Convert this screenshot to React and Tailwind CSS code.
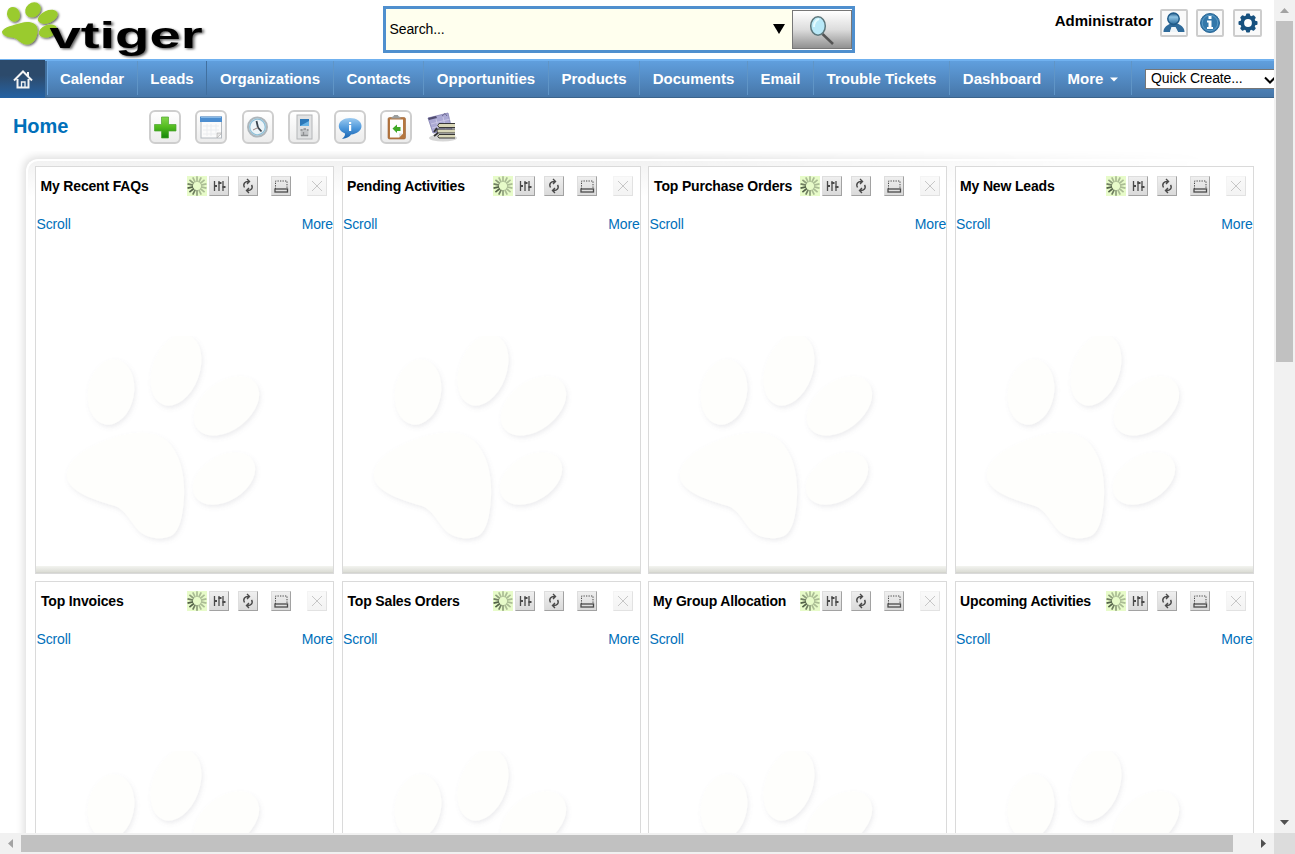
import React from "react";

const TABS = [
  ["Calendar", "w-[91px]"],
  ["Leads", "w-[69px]"],
  ["Organizations", "w-[127px]"],
  ["Contacts", "w-[90px]"],
  ["Opportunities", "w-[125px]"],
  ["Products", "w-[91px]"],
  ["Documents", "w-[108px]"],
  ["Email", "w-[66px]"],
  ["Trouble Tickets", "w-[136px]"],
  ["Dashboard", "w-[105px]"],
  ["More", "w-[77px]"],
];

const WIDGETS = [
  { title: "My Recent FAQs", more: true, pad: "pl-[4.500px]" },
  { title: "Pending Activities", more: true, pad: "pl-[4.500px]" },
  { title: "Top Purchase Orders", more: true, pad: "pl-[5px]" },
  { title: "My New Leads", more: true, pad: "pl-[4.500px]" },
  { title: "Top Invoices", more: true, pad: "pl-[5px]" },
  { title: "Top Sales Orders", more: true, pad: "pl-[5px]" },
  { title: "My Group Allocation", more: false, pad: "pl-[4px]" },
  { title: "Upcoming Activities", more: true, pad: "pl-[4.500px]" },
];

function Logo() {
  return (
    <svg width="210" height="59" viewBox="0 0 210 59" className="shrink-0">
      <defs>
        <filter id="logoShadow" x="-10%" y="-10%" width="120%" height="130%">
          <feDropShadow dx="1.2" dy="1.2" stdDeviation="0.9" floodColor="#000" floodOpacity="0.65" />
        </filter>
      </defs>
      <g fill="#9acb2d" filter="url(#logoShadow)">
        <ellipse cx="13.5" cy="14.300" rx="6.3" ry="7.500" transform="rotate(-20 13.5 14.3)" />
        <ellipse cx="33" cy="9.8" rx="8.300" ry="7" transform="rotate(-40 33 9.800)" />
        <ellipse cx="47.800" cy="16.800" rx="10.500" ry="6.200" transform="rotate(-24 47.8 16.8)" />
        <ellipse cx="48" cy="31" rx="9.500" ry="6" transform="rotate(-20 48 31)" />
        <path d="M2 31.500C4 27 14 25 21 23C29 20.500 37 23 37.500 29C38 38 33 44.500 27 44.500C20 44.500 19 38.500 12 37.500C7 37 2 35.500 2 31.500Z" />
      </g>
      <text
        transform="translate(49.500 48) scale(1.52 1)"
        fontFamily="Liberation Sans, sans-serif"
        fontWeight="700"
        fontSize="37"
        fill="#000"
        filter="url(#logoShadow)"
      >
        vtiger
      </text>
    </svg>
  );
}

function SearchBox() {
  return (
    <div className="flex h-[47px] w-[472px] shrink-0 border-[3px] border-[#4f8fce] bg-white">
      <div className="flex flex-1 items-center justify-between bg-[#ffffee] pl-[3.500px] pr-[7px] text-[14px] tracking-[-.1px]">
        <span>Search...</span>
        <svg width="12" height="11" viewBox="0 0 12 11">
          <path d="M0 0H12L6 10Z" fill="#000" />
        </svg>
      </div>
      <div className="mt-px flex h-[39px] w-[60px] items-center justify-center border border-[#777] bg-linear-to-b from-white via-[#ddd] to-[#919191]">
        <svg width="28" height="32" viewBox="0 0 28 32">
          <path d="M14.500 20L25 30" stroke="#555" strokeWidth="2.500" />
          <ellipse cx="10" cy="12" rx="7.300" ry="9.300" fill="#b9e9f8" stroke="#5d777c" strokeWidth="1.500" />
          <path d="M6 13C6 8 8 6 11 5" stroke="#e4fbff" strokeWidth="2" fill="none" />
        </svg>
      </div>
    </div>
  );
}

function UserIcon() {
  return (
    <svg width="24" height="24" viewBox="0 0 24 24">
      <defs>
        <linearGradient id="head" x1="0" y1="0" x2="0" y2="1">
          <stop offset="0" stopColor="#1d5583" />
          <stop offset=".35" stopColor="#8fc4e4" />
          <stop offset="1" stopColor="#2b6b9c" />
        </linearGradient>
      </defs>
      <path d="M1.500 21C1.500 17 4 15 7.500 13L12 12L16.500 13C20 15 22.500 17 22.500 21H16L13.500 16.500H9.500L8 21Z" fill="#2f6b9b" />
      <path d="M9.500 16H13.500L16 21H8Z" fill="#eef4f8" />
      <circle cx="11.500" cy="7.700" r="5.700" fill="url(#head)" stroke="#1f5a88" strokeWidth="1.500" />
    </svg>
  );
}

function InfoIcon() {
  return (
    <svg width="22" height="22" viewBox="0 0 22 22">
      <circle cx="11" cy="11" r="9.500" fill="#3378aa" stroke="#2a6796" />
      <circle cx="11" cy="11" r="7.800" fill="none" stroke="#5b9bc7" strokeWidth="1" />
      <path d="M9.500 4h3v3h-3zM8 8.500h4.500V15H14v2H8v-2h1.500v-4.500H8z" fill="#fff" />
    </svg>
  );
}

function GearIcon() {
  return (
    <svg width="22" height="22" viewBox="0 0 22 22">
      <g fill="#17517f">
        <circle cx="11" cy="11" r="7.700" />
        {[0, 45, 90, 135].map((a) => (
          <rect key={a} x="9" y="1.500" width="4" height="19" rx="1" transform={`rotate(${a} 11 11)`} />
        ))}
      </g>
      <circle cx="11" cy="11" r="3.900" fill="#fff" />
    </svg>
  );
}

function HeaderButton({ children, width }) {
  return (
    <div className={`flex h-[28px] items-center justify-center rounded-[2px] border-2 border-[#cdcdcd] bg-[#fafafa] ${width}`}>
      {children}
    </div>
  );
}

function ToolButton({ children }) {
  return (
    <div className="flex h-[34px] w-[32px] items-center justify-center rounded-[6px] border-2 border-[#cecece] bg-linear-to-b from-white to-[#ececec]">
      {children}
    </div>
  );
}

function Toolbar() {
  return (
    <div className="flex gap-[14.300px]">
      <ToolButton>
        <svg width="24" height="26" viewBox="0 0 24 26">
          <defs>
            <linearGradient id="plus" x1="0" y1="0" x2="0" y2="1">
              <stop offset="0" stopColor="#83d64c" />
              <stop offset=".45" stopColor="#55bd20" />
              <stop offset="1" stopColor="#14860a" />
            </linearGradient>
          </defs>
          <path d="M8.500 3h7v7.500H23v6.500h-7.500V24h-7v-7H1.500v-6.500h7z" fill="url(#plus)" stroke="#4ba52e" strokeWidth=".7" />
        </svg>
      </ToolButton>
      <ToolButton>
        <svg width="26" height="26" viewBox="0 0 26 26">
          <rect x="3" y="3" width="20.500" height="21" fill="#fbfbfb" stroke="#b4bac0" />
          <rect x="2" y="2.500" width="22" height="5.500" fill="#4d8ed0" />
          <path d="M3 3.500h20" stroke="#86b9e8" />
          <path d="M5 12h16M5 16h16M5 20h13M9 10v12M13 10v12M18 10v9" stroke="#e9ebed" strokeWidth=".8" />
          <path d="M24 19h-5v5z" fill="#e5e5e5" stroke="#aaa" strokeWidth=".6" />
        </svg>
      </ToolButton>
      <ToolButton>
        <svg width="26" height="26" viewBox="0 0 26 26">
          <circle cx="12.500" cy="13" r="9.500" fill="#ecf4f8" stroke="#aeb6bb" strokeWidth="2" />
          <circle cx="12.500" cy="13" r="7.800" fill="none" stroke="#8fc0d8" strokeWidth="1.300" />
          <path d="M11.500 7L13 13.500L16.500 17.500" stroke="#3b4650" strokeWidth="1.800" fill="none" />
          <path d="M13 13.500L8 16" stroke="#9a8580" />
        </svg>
      </ToolButton>
      <ToolButton>
        <svg width="24" height="28" viewBox="0 0 24 28">
          <rect x="5" y="2" width="15" height="24" fill="#e1e2e3" stroke="#b4b6b8" />
          <rect x="8" y="6" width="9" height="7" fill="#2b78b9" />
          <path d="M8 13L17 8v5z" fill="#68b4e6" />
          <rect x="8.500" y="16" width="8" height="7" fill="#c3c5c7" />
          <path d="M8.500 17h2M11.500 16h2.500M15 17h1.500M11.500 19v3M9 22.500h7" stroke="#8d8f91" strokeWidth="1.300" />
        </svg>
      </ToolButton>
      <ToolButton>
        <svg width="26" height="26" viewBox="0 0 26 26">
          <defs>
            <linearGradient id="bubble" x1="0" y1="0" x2="0" y2="1">
              <stop offset="0" stopColor="#9bcaf0" />
              <stop offset=".5" stopColor="#4b96da" />
              <stop offset="1" stopColor="#1761ae" />
            </linearGradient>
          </defs>
          <path d="M13 4C19.500 4 24.500 7.500 24.500 12S20 20 14 20.500C13 22.500 10 24.500 5 25C8 22.500 8 21 8 19.500C4 18 1.800 15 1.800 12C1.800 7 7 4 13 4Z" fill="url(#bubble)" />
          <path d="M12 8h2.200v2H12zM12 11h2.200v6H12z" fill="#fff" />
        </svg>
      </ToolButton>
      <ToolButton>
        <svg width="26" height="28" viewBox="0 0 26 28">
          <rect x="5" y="4.500" width="17.500" height="21.500" rx="1.500" fill="#b4763f" stroke="#9c6335" strokeWidth=".6" />
          <path d="M7 6.500h13v14l-4 4H7z" fill="#fdfdfd" />
          <path d="M20 20.500h-4v4z" fill="#ddd" />
          <path d="M8 5.500C9 3 11 4 11 2h4c0 2 2 1 3 3.500z" fill="#9b9e9e" />
          <path d="M9.500 15.500l4.500-4v2.500h3.500v4H14V20z" fill="#3da824" />
        </svg>
      </ToolButton>
      <div className="flex h-[34px] w-[32px] items-center justify-center">
        <svg width="32" height="34" viewBox="0 0 32 34">
          <ellipse cx="16" cy="28" rx="14" ry="3.500" fill="#bbb" opacity=".6" />
          <path d="M1 8L21 3L25 20L6 23Z" fill="#aba9d4" stroke="#8482b3" strokeWidth=".8" />
          <path d="M1 8L9 6L10 8L2 10Z" fill="#514c70" />
          <path d="M15 6l3-2.500L20 6" stroke="#6a6690" fill="none" />
          <path d="M4 14l19-5M5 18l19-5M9 9l3 13M16 7l3 13" stroke="#cfcde8" strokeWidth=".8" />
          <path d="M11 14h17v3.500H11zM10 19.500h18V23H10zM11 25h17v3H11z" fill="#d9d7b8" />
          <path d="M28 13.500H12q-2.500 2 0 4h16M28 19H11q-2.500 2 0 4h17M28 24.500H12q-2.500 2 0 3.500h16" stroke="#383838" strokeWidth="1" fill="none" />
          <path d="M7 26l4-3M7 22l3-4" stroke="#333" strokeWidth="2" />
        </svg>
      </div>
    </div>
  );
}

function Loader() {
  return (
    <svg width="20" height="20" viewBox="0 0 20 20" className="bg-[#e7fbc9]">
      {Array.from({ length: 14 }, (_, i) => (
        <path
          key={i}
          d="M10 .3V6"
          stroke="#3c4a34"
          strokeWidth="1.700"
          opacity={0.35 + 0.6 * Math.max(0, 1 - Math.abs(i - 9.5) / 3.5)}
          transform={`rotate(${i * (360 / 14)} 10 10)`}
        />
      ))}
    </svg>
  );
}

function SmallButton({ children, className = "" }) {
  return (
    <div className={`flex h-[20px] w-[20px] items-center justify-center border border-t-[#dedede] border-l-[#dedede] border-r-[#a2a2a2] border-b-[#a2a2a2] bg-linear-to-b from-[#efefef] to-[#dadada] ${className}`}>
      <svg width="18" height="18" viewBox="0 0 18 18" fill="none" stroke="#4a4a4a">
        {children}
      </svg>
    </div>
  );
}

function Paw() {
  return (
    <svg width="210" height="230" viewBox="60 335 210 230" className="ml-[24px] mt-[101px] shrink-0">
      <defs>
        <filter id="pawShadow" x="-10%" y="-10%" width="120%" height="125%">
          <feDropShadow dx="1.500" dy="2.500" stdDeviation="2" floodColor="#777788" floodOpacity="0.130" />
        </filter>
      </defs>
      <g fill="#fefefc" filter="url(#pawShadow)">
        <ellipse cx="111" cy="391" rx="23" ry="33" transform="rotate(10 111 391)" />
        <ellipse cx="176" cy="369" rx="23.500" ry="37" transform="rotate(20 176 369)" />
        <ellipse cx="226.500" cy="405" rx="37" ry="24" transform="rotate(-38 226.500 405)" />
        <ellipse cx="224" cy="477.500" rx="34" ry="22.500" transform="rotate(-32 224 477.500)" />
        <path d="M67 475C67 456 92 444 113 437C127 432 152 427 167 440C181 453 185 476 184 496C183 514 180 530 171 535C161 539 148 538 139 530C131 522 126 509 115 505C98 500 67 491 67 475Z" />
      </g>
    </svg>
  );
}

function Widget({ title, more, pad }) {
  return (
    <section className="flex h-[408px] w-[299px] flex-col overflow-hidden border border-[#dadada] bg-white">
      <div className="mt-px flex h-[38px] items-center pr-[6.400px]">
        <h2 className={`flex-1 whitespace-nowrap text-[14px] font-bold tracking-[-.17px] ${pad}`}>{title}</h2>
        <Loader />
        <SmallButton className="ml-[2px]">
          <path d="M4.500 4v10M9 4v10M13 4v10" strokeWidth="1.300" />
          <path d="M4.500 9h2.500M8.500 6h3M12.500 10h3" strokeWidth="2" />
        </SmallButton>
        <SmallButton className="ml-[9px]">
          <path d="M10 16L7.500 13.500L10 11M8 13.500C12 14 14.500 11 12.500 8M8 2L10.500 4.500L8 7M10 4.500C6 4 3.500 7 5.500 10.500" strokeWidth="1.400" />
        </SmallButton>
        <SmallButton className="ml-[13px]">
          <path d="M3.500 12V4H15V12" strokeDasharray="1.300 1.200" />
          <rect x="3" y="12" width="12.500" height="3" strokeWidth="1.300" />
        </SmallButton>
        <SmallButton className="ml-[16px] opacity-30">
          <path d="M4 4l10 10M14 4L4 14" />
        </SmallButton>
      </div>
      <div className="mt-[9px] flex h-[22px] items-center justify-between pl-[.5px] text-[14px] tracking-[-.15px] text-[#0070ba]">
        <span>Scroll</span>
        {more && <span>More</span>}
      </div>
      <Paw />
      <div className="mt-auto h-[7px] shrink-0 border-b border-[#d4d5cf] bg-linear-to-b from-[#f3f4f0] to-[#dcddd6]" />
    </section>
  );
}

function Arrow({ d, fill }) {
  return (
    <svg width="9" height="9" viewBox="0 0 9 9">
      <path d={d} fill={fill} />
    </svg>
  );
}

export default function App() {
  return (
    <div className="grid h-[854px] w-[1295px] grid-cols-[1274px_21px] grid-rows-[833px_21px] overflow-hidden bg-white font-['Liberation_Sans',Arial,sans-serif] text-black">
      <main className="flex min-w-0 flex-col overflow-hidden">
        <header className="flex h-[59px] shrink-0 items-start">
          <Logo />
          <div className="ml-[173px] mt-[6px]">
            <SearchBox />
          </div>
          <div className="ml-auto mr-[12px] mt-[9px] flex">
            <span className="mr-[7px] mt-px text-[15px] font-bold leading-[22px]">Administrator</span>
            <HeaderButton width="w-[28px]"><UserIcon /></HeaderButton>
            <div className="w-[8px]" />
            <HeaderButton width="w-[28px]"><InfoIcon /></HeaderButton>
            <div className="w-[9px]" />
            <HeaderButton width="w-[29px]"><GearIcon /></HeaderButton>
          </div>
        </header>

        <nav className="flex h-[39px] w-[1300px] shrink-0 border-b border-t-2 border-b-[#3b648c] border-t-[#70b1ef] bg-linear-to-b from-[#609fde] to-[#4676a8]">
          <div className="-mt-px flex h-[38px] w-[45px] shrink-0 items-center justify-center bg-linear-to-b from-[#2c4a6b] from-40% to-[#2462a3]">
            <svg width="20" height="20" viewBox="0 0 20 20" fill="none" stroke="#f4f4f4" strokeWidth="2">
              <path d="M1 11.500L10 2.500L19 11.500M4.500 10V18.500H15.500V10M15 3v4" />
              <path d="M8.500 18v-5h3.500v5" strokeWidth="1.300" />
            </svg>
          </div>
          <div className="w-[2px] shrink-0 bg-[#41709f]" />
          {TABS.map(([name, width], i) => (
            <div
              key={name}
              className={`mb-[2px] flex shrink-0 items-center justify-center border-r pt-[2px] text-[15px] font-bold text-white ${name === "Leads" ? "border-r-[#41709f]" : "border-r-[#6095c6]"} ${i === 0 ? "border-l border-l-[#6da7df] pr-px" : ""} ${width}`}
            >
              {name}
              {name === "More" && (
                <svg width="8" height="5" viewBox="0 0 8 5" className="ml-[7px]">
                  <path d="M0 .5H8L4 4.500Z" fill="#fff" />
                </svg>
              )}
            </div>
          ))}
          <div className="ml-[13px] mt-[8px] flex h-[20px] w-[136px] shrink-0 items-center border border-[#767676] bg-white pb-px pl-[5px] text-[14px] tracking-[-.12px]">
            <span className="w-[113px]">Quick Create...</span>
            <svg width="12" height="8" viewBox="0 0 12 8" fill="none" stroke="#000" strokeWidth="2" className="mt-[3px]">
              <path d="M1 1.500L6 6.500L11 1.500" />
            </svg>
          </div>
        </nav>

        <div className="flex h-[53px] shrink-0 pl-[13px] pt-[12px]">
          <h1 className="w-[136px] text-[20px] font-bold leading-[32px] tracking-[-.1px] text-[#0070ba]">Home</h1>
          <Toolbar />
        </div>

        <div className="isolate grid w-[1274px]">
          <div className="z-0 col-start-1 row-start-1 overflow-hidden pl-[26px] pt-[8px] mask-r-from-50% mask-r-to-95%">
            <div className="h-full w-[1300px] rounded-tl-[12px] border-l-2 border-t-2 border-white bg-white bg-linear-to-b from-[#f2f2f2] to-white to-[36px] shadow-[-2px_-2px_8px_rgba(0,0,0,0.14)]" />
          </div>
          <div className="z-10 col-start-1 row-start-1 grid w-[1253.600px] grid-cols-[repeat(4,299px)] justify-between gap-y-[7px] pl-[35px] pt-[15px]">
            {WIDGETS.map((w) => (
              <Widget key={w.title} {...w} />
            ))}
          </div>
        </div>
      </main>

      <aside className="flex flex-col items-center bg-[#f1f1f1]">
        <div className="flex h-[21px] items-center"><Arrow d="M0 7L4.500 2L9 7Z" fill="#a3a3a3" /></div>
        <div className="h-[341px] w-[17px] bg-[#c1c1c1]" />
        <div className="mt-auto flex h-[21px] items-center"><Arrow d="M0 2L4.500 7L9 2Z" fill="#505050" /></div>
      </aside>
      <div className="flex items-center bg-[#f1f1f1]">
        <div className="flex w-[21px] justify-center"><Arrow d="M7 0L2 4.500L7 9Z" fill="#a3a3a3" /></div>
        <div className="h-[17px] w-[1212px] bg-[#c1c1c1]" />
        <div className="ml-auto flex w-[21px] justify-center"><Arrow d="M2 0L7 4.500L2 9Z" fill="#505050" /></div>
      </div>
      <div className="bg-[#dcdcdc]" />
    </div>
  );
}
